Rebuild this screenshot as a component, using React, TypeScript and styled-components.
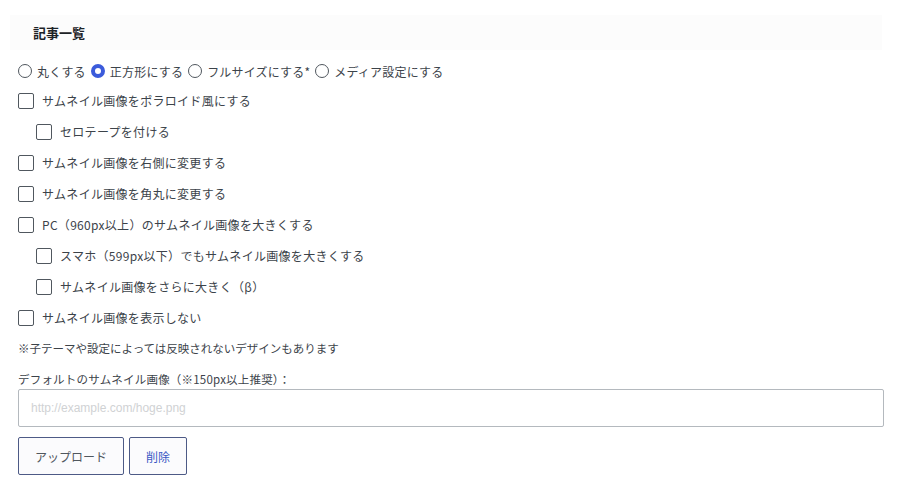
import styled, { createGlobalStyle } from 'styled-components';

const GlobalStyle = createGlobalStyle`
  * { box-sizing: border-box; }
  body {
    margin: 0;
    background: #ffffff;
    font-family: 'Noto Sans CJK JP', 'Noto Sans', sans-serif;
    color: #3c434a;
  }
`;

const Page = styled.div`
  width: 900px;
  padding: 15px 16px 0 18px;
`;

const SectionHead = styled.div`
  margin: 0 2px 0 -8px;
  height: 35px;
  padding: 0 23px;
  display: flex;
  align-items: center;
  background: #fcfcfc;
`;

const Title = styled.h3`
  margin: 0;
  font-size: 13px;
  font-weight: 700;
  color: #1d2327;
`;

const RadioRow = styled.div`
  display: flex;
  align-items: center;
  height: 24px;
  margin-top: 9px;
  font-size: 12px;
  letter-spacing: 0.2px;
`;

const RadioLabel = styled.label`
  display: inline-flex;
  align-items: center;
  margin-right: 5px;
  white-space: nowrap;
`;

const Radio = styled.span<{ $checked?: boolean }>`
  width: 14px;
  height: 14px;
  border-radius: 50%;
  margin-right: 5px;
  border: ${({ $checked }) => ($checked ? '4px solid #3b5bdb' : '1px solid #50575e')};
  background: #fff;
  flex-shrink: 0;
`;

const CheckList = styled.div`
  display: flex;
  flex-direction: column;
  margin-top: 2px;
`;

const CheckRow = styled.label<{ $indent?: boolean }>`
  display: flex;
  align-items: center;
  height: 31px;
  padding-left: ${({ $indent }) => ($indent ? '18px' : '0')};
  font-size: 12px;
  letter-spacing: 0.3px;
  gap: 8px;
`;

const Box = styled.span`
  width: 16px;
  height: 16px;
  border: 1px solid #50575e;
  border-radius: 2px;
  background: #fff;
  flex-shrink: 0;
`;

const Note = styled.p`
  margin: 6px 0 0;
  font-size: 11.5px;
  line-height: 18px;
`;

const FieldLabel = styled.p`
  margin: 13px 0 0;
  font-size: 11.5px;
  line-height: 18px;
  letter-spacing: 0.2px;
`;

const UrlInput = styled.input`
  display: block;
  width: 866px;
  height: 38px;
  margin-top: 1px;
  padding: 0 12px;
  border: 1px solid #b4b9be;
  border-radius: 2px;
  font-family: 'Liberation Sans', Arial, sans-serif;
  font-size: 12px;
  color: #3c434a;
  &::placeholder {
    color: #d0d2d4;
  }
`;

const ButtonRow = styled.div`
  display: flex;
  gap: 5px;
  margin-top: 10px;
`;

const Button = styled.button<{ $accent?: boolean }>`
  height: 38px;
  padding: 0 16px;
  border: 1px solid #4d5a86;
  border-radius: 2px;
  background: #fbfbfd;
  font-family: 'Noto Sans CJK JP', sans-serif;
  font-size: 12px;
  color: ${({ $accent }) => ($accent ? '#3858c4' : '#50575e')};
`;

const radios = [
  { label: '丸くする' },
  { label: '正方形にする', checked: true },
  { label: 'フルサイズにする*' },
  { label: 'メディア設定にする' },
];

const checks = [
  { label: 'サムネイル画像をポラロイド風にする' },
  { label: 'セロテープを付ける', indent: true },
  { label: 'サムネイル画像を右側に変更する' },
  { label: 'サムネイル画像を角丸に変更する' },
  { label: 'PC（960px以上）のサムネイル画像を大きくする' },
  { label: 'スマホ（599px以下）でもサムネイル画像を大きくする', indent: true },
  { label: 'サムネイル画像をさらに大きく（β）', indent: true },
  { label: 'サムネイル画像を表示しない' },
];

export default function App() {
  return (
    <>
      <GlobalStyle />
      <Page>
        <SectionHead>
          <Title>記事一覧</Title>
        </SectionHead>
        <RadioRow>
          {radios.map((r) => (
            <RadioLabel key={r.label}>
              <Radio $checked={r.checked} />
              {r.label}
            </RadioLabel>
          ))}
        </RadioRow>
        <CheckList>
          {checks.map((c) => (
            <CheckRow key={c.label} $indent={c.indent}>
              <Box />
              {c.label}
            </CheckRow>
          ))}
        </CheckList>
        <Note>※子テーマや設定によっては反映されないデザインもあります</Note>
        <FieldLabel>デフォルトのサムネイル画像（※150px以上推奨）：</FieldLabel>
        <UrlInput placeholder="http://example.com/hoge.png" />
        <ButtonRow>
          <Button>アップロード</Button>
          <Button $accent>削除</Button>
        </ButtonRow>
      </Page>
    </>
  );
}
